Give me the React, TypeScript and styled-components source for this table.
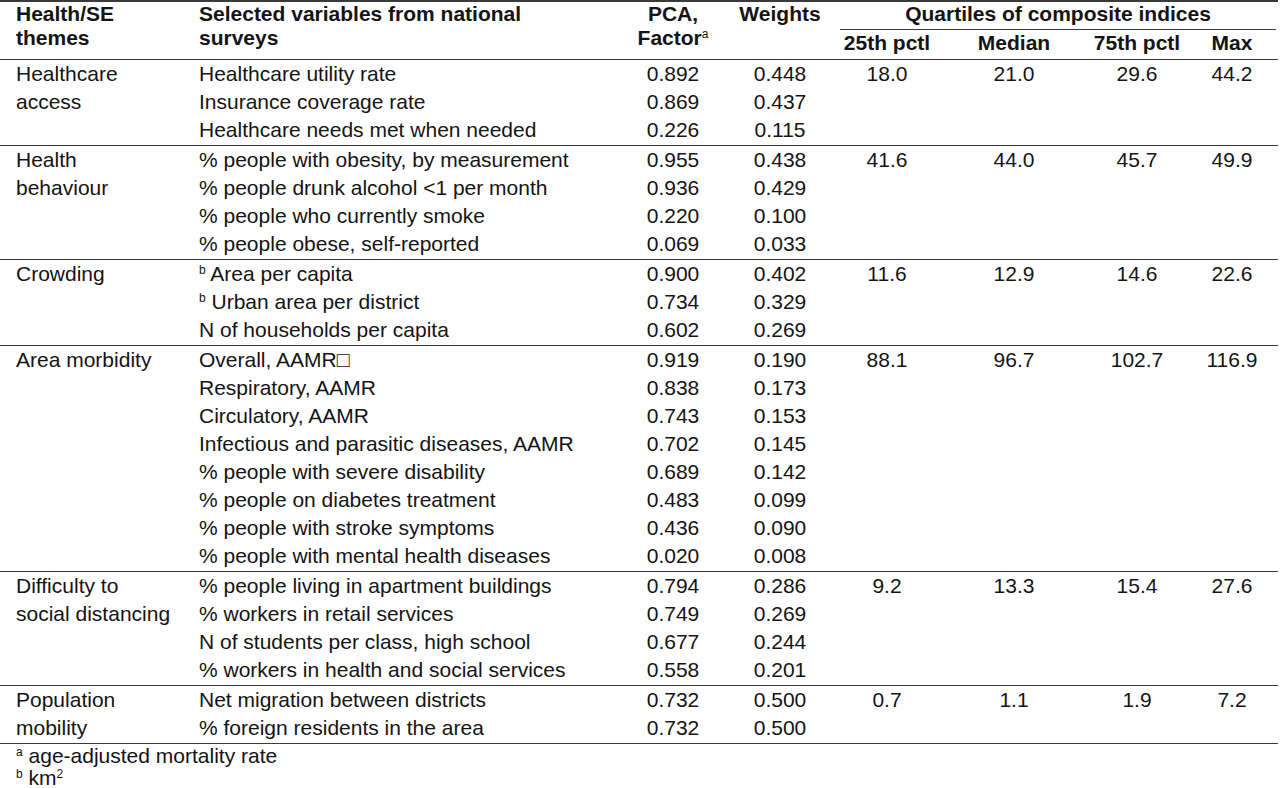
import React from "react";
import styled, { createGlobalStyle } from "styled-components";

type Row = { label: React.ReactNode; pca: string; weight: string };
type Group = {
  theme: React.ReactNode;
  rows: Row[];
  quartiles: [string, string, string, string];
};

const GROUPS: Group[] = [
  {
    theme: (<>Healthcare<br />access</>),
    rows: [
      { label: "Healthcare utility rate", pca: "0.892", weight: "0.448" },
      { label: "Insurance coverage rate", pca: "0.869", weight: "0.437" },
      { label: "Healthcare needs met when needed", pca: "0.226", weight: "0.115" },
    ],
    quartiles: ["18.0", "21.0", "29.6", "44.2"],
  },
  {
    theme: (<>Health<br />behaviour</>),
    rows: [
      { label: "% people with obesity, by measurement", pca: "0.955", weight: "0.438" },
      { label: "% people drunk alcohol <1 per month", pca: "0.936", weight: "0.429" },
      { label: "% people who currently smoke", pca: "0.220", weight: "0.100" },
      { label: "% people obese, self-reported", pca: "0.069", weight: "0.033" },
    ],
    quartiles: ["41.6", "44.0", "45.7", "49.9"],
  },
  {
    theme: "Crowding",
    rows: [
      { label: (<><Sup>b</Sup> Area per capita</>), pca: "0.900", weight: "0.402" },
      { label: (<><Sup>b</Sup> Urban area per district</>), pca: "0.734", weight: "0.329" },
      { label: "N of households per capita", pca: "0.602", weight: "0.269" },
    ],
    quartiles: ["11.6", "12.9", "14.6", "22.6"],
  },
  {
    theme: "Area morbidity",
    rows: [
      { label: "Overall, AAMR\u25A1", pca: "0.919", weight: "0.190" },
      { label: "Respiratory, AAMR", pca: "0.838", weight: "0.173" },
      { label: "Circulatory, AAMR", pca: "0.743", weight: "0.153" },
      { label: "Infectious and parasitic diseases, AAMR", pca: "0.702", weight: "0.145" },
      { label: "% people with severe disability", pca: "0.689", weight: "0.142" },
      { label: "% people on diabetes treatment", pca: "0.483", weight: "0.099" },
      { label: "% people with stroke symptoms", pca: "0.436", weight: "0.090" },
      { label: "% people with mental health diseases", pca: "0.020", weight: "0.008" },
    ],
    quartiles: ["88.1", "96.7", "102.7", "116.9"],
  },
  {
    theme: (<>Difficulty to<br />social distancing</>),
    rows: [
      { label: "% people living in apartment buildings", pca: "0.794", weight: "0.286" },
      { label: "% workers in retail services", pca: "0.749", weight: "0.269" },
      { label: "N of students per class, high school", pca: "0.677", weight: "0.244" },
      { label: "% workers in health and social services", pca: "0.558", weight: "0.201" },
    ],
    quartiles: ["9.2", "13.3", "15.4", "27.6"],
  },
  {
    theme: (<>Population<br />mobility</>),
    rows: [
      { label: "Net migration between districts", pca: "0.732", weight: "0.500" },
      { label: "% foreign residents in the area", pca: "0.732", weight: "0.500" },
    ],
    quartiles: ["0.7", "1.1", "1.9", "7.2"],
  },
];

function Sup({ children }: { children: React.ReactNode }) {
  return <SupText>{children}</SupText>;
}

const App = () => {
  return (
    <>
      <GlobalStyle />
      <Page>
        <Table>
          <colgroup>
            <col style={{ width: 199 }} />
            <col style={{ width: 421 }} />
            <col style={{ width: 106 }} />
            <col style={{ width: 108 }} />
            <col style={{ width: 106 }} />
            <col style={{ width: 148 }} />
            <col style={{ width: 98 }} />
            <col style={{ width: 92 }} />
          </colgroup>
          <thead>
            <tr>
              <HeadCell rowSpan={2} $align="left" $first>
                Health/SE<br />themes
              </HeadCell>
              <HeadCell rowSpan={2} $align="left">
                Selected variables from national<br />surveys
              </HeadCell>
              <HeadCell rowSpan={2}>
                PCA,<br />Factor<Sup>a</Sup>
              </HeadCell>
              <HeadCell rowSpan={2}>Weights</HeadCell>
              <GroupHeadCell colSpan={4}>
                <GroupTitle>Quartiles of composite indices</GroupTitle>
              </GroupHeadCell>
            </tr>
            <tr>
              <SubHeadCell>25th pctl</SubHeadCell>
              <SubHeadCell>Median</SubHeadCell>
              <SubHeadCell>75th pctl</SubHeadCell>
              <SubHeadCell>Max</SubHeadCell>
            </tr>
          </thead>
          {GROUPS.map((group, gi) => (
            <tbody key={gi}>
              {group.rows.map((row, ri) => {
                const last = ri === group.rows.length - 1;
                return (
                  <tr key={ri}>
                    {ri === 0 && (
                      <ThemeCell rowSpan={group.rows.length}>{group.theme}</ThemeCell>
                    )}
                    <Cell $align="left" $last={last}>{row.label}</Cell>
                    <Cell $last={last}>{row.pca}</Cell>
                    <Cell $last={last}>{row.weight}</Cell>
                    {ri === 0 ? (
                      group.quartiles.map((q, qi) => (
                        <QuartileCell key={qi} rowSpan={group.rows.length}>
                          {q}
                        </QuartileCell>
                      ))
                    ) : null}
                  </tr>
                );
              })}
            </tbody>
          ))}
        </Table>
        <Notes>
          <Note><Sup>a</Sup> age-adjusted mortality rate</Note>
          <Note><Sup>b</Sup> km<Sup>2</Sup></Note>
        </Notes>
      </Page>
    </>
  );
};

const GlobalStyle = createGlobalStyle`
  html, body {
    margin: 0;
    padding: 0;
    background: #ffffff;
  }
  body {
    font-family: "Liberation Sans", Arial, sans-serif;
    color: #141414;
  }
`;

const Page = styled.div`
  width: 1280px;
  font-size: 21px;
`;

const Table = styled.table`
  width: 1278px;
  border-collapse: collapse;
  table-layout: fixed;
  border-top: 2px solid #3a3a3a;
`;

const HeadCell = styled.th<{ $align?: "left" | "center"; $first?: boolean }>`
  text-align: ${(p) => p.$align || "center"};
  vertical-align: top;
  font-weight: bold;
  line-height: 24px;
  padding: 0 0 8px ${(p) => (p.$first ? "16px" : "0")};
  border-bottom: 1px solid #3a3a3a;
  white-space: nowrap;
`;

const GroupHeadCell = styled.th`
  font-weight: bold;
  padding: 0 2px 0 6px;
  vertical-align: top;
`;

const GroupTitle = styled.div`
  line-height: 24px;
  height: 27px;
  text-align: center;
  border-bottom: 1px solid #3a3a3a;
`;

const SubHeadCell = styled.th`
  font-weight: bold;
  text-align: center;
  line-height: 24px;
  padding: 1px 0 4px 0;
  border-bottom: 1px solid #3a3a3a;
  white-space: nowrap;
`;

const Cell = styled.td<{ $align?: "left" | "center"; $last?: boolean }>`
  text-align: ${(p) => p.$align || "center"};
  height: 28px;
  line-height: 28px;
  padding: 0 0 ${(p) => (p.$last ? "1px" : "0")} 0;
  white-space: nowrap;
  border-bottom: ${(p) => (p.$last ? "1px solid #3a3a3a" : "none")};
`;

const ThemeCell = styled.td`
  vertical-align: top;
  line-height: 28px;
  padding: 0 0 0 16px;
  white-space: nowrap;
  border-bottom: 1px solid #3a3a3a;
`;

const QuartileCell = styled.td`
  vertical-align: top;
  text-align: center;
  line-height: 28px;
  padding: 0;
  border-bottom: 1px solid #3a3a3a;
`;

const SupText = styled.sup`
  font-size: 12px;
  line-height: 0;
  vertical-align: 7px;
  font-weight: normal;
`;

const Notes = styled.div`
  padding: 1px 0 0 16px;
`;

const Note = styled.div`
  line-height: 22px;
`;

export default App;
